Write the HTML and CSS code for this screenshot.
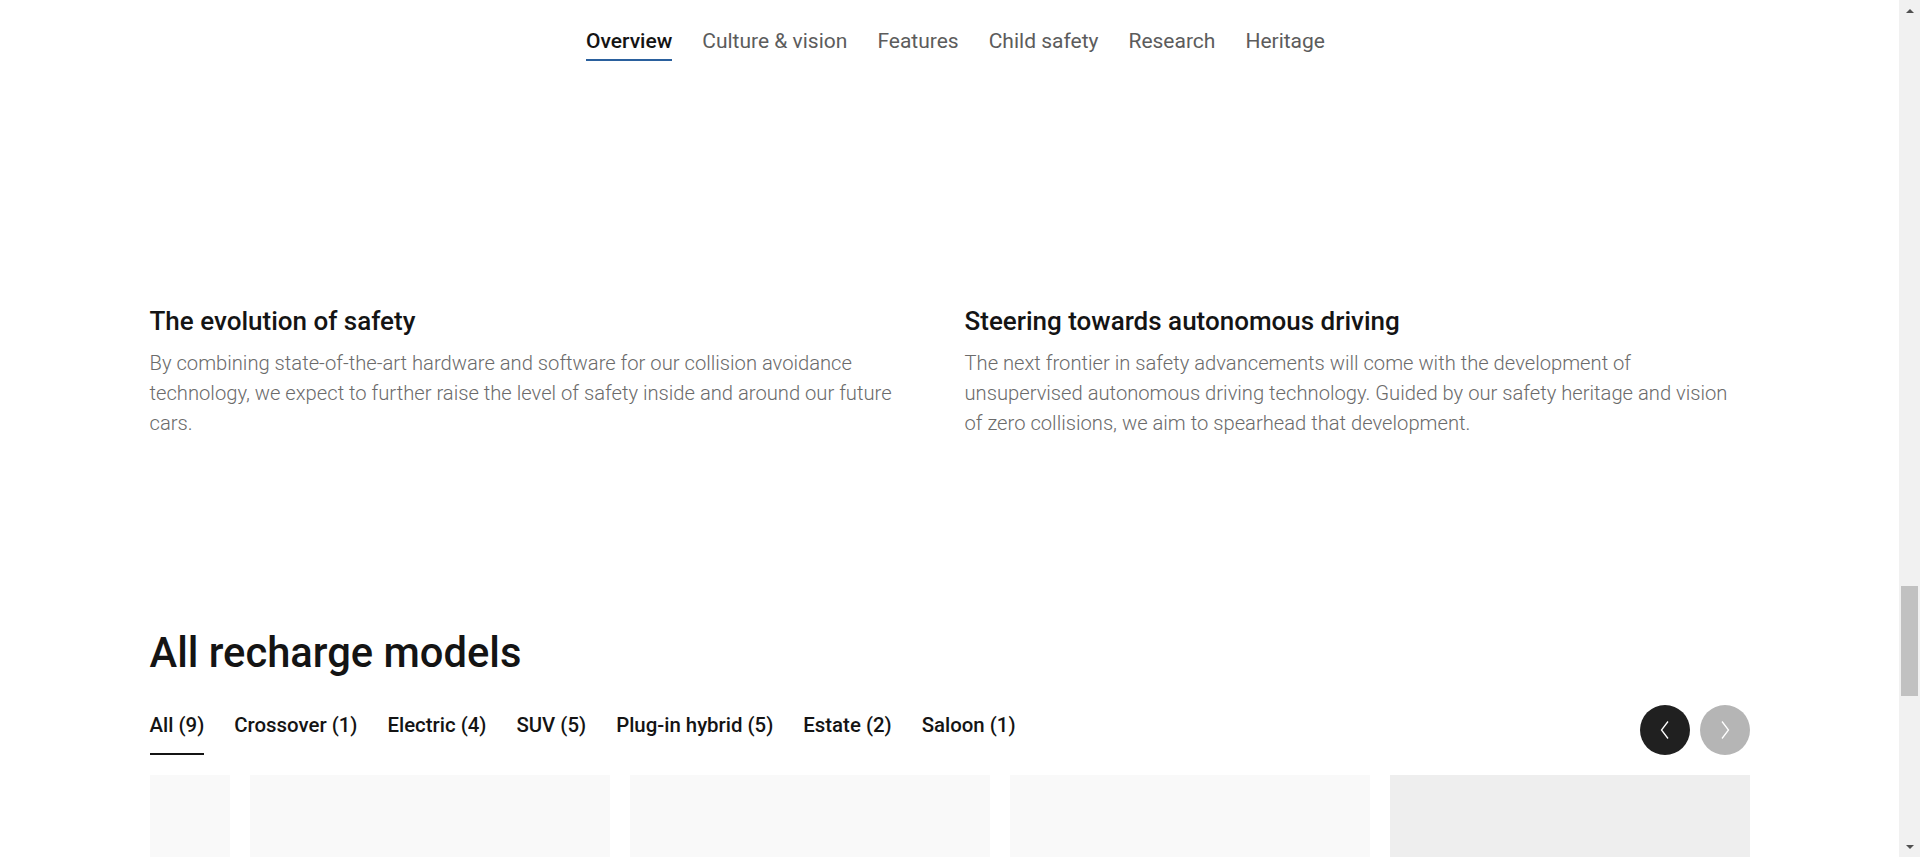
FILE: index.html
```html
<!DOCTYPE html>
<html lang="en">
<head>
<meta charset="utf-8">
<title>Safety</title>
<link rel="stylesheet" href="styles.css">
</head>
<body>
<div class="page">
  <main class="main">
    <nav class="subnav">
      <a class="subnav-item is-active">Overview</a>
      <a class="subnav-item">Culture &amp; vision</a>
      <a class="subnav-item">Features</a>
      <a class="subnav-item">Child safety</a>
      <a class="subnav-item">Research</a>
      <a class="subnav-item">Heritage</a>
    </nav>

    <section class="container features">
      <article class="feature">
        <h3 class="feature-title">The evolution of safety</h3>
        <p class="feature-text">By combining state-of-the-art hardware and software for our collision avoidance technology, we expect to further raise the level of safety inside and around our future cars.</p>
      </article>
      <article class="feature">
        <h3 class="feature-title">Steering towards autonomous driving</h3>
        <p class="feature-text">The next frontier in safety advancements will come with the development of unsupervised autonomous driving technology. Guided by our safety heritage and vision of zero collisions, we aim to spearhead that development.</p>
      </article>
    </section>

    <section class="container models">
      <h2 class="models-title">All recharge models</h2>
      <div class="models-bar">
        <div class="tabs">
          <a class="tab is-active">All (9)</a>
          <a class="tab">Crossover (1)</a>
          <a class="tab">Electric (4)</a>
          <a class="tab">SUV (5)</a>
          <a class="tab">Plug-in hybrid (5)</a>
          <a class="tab">Estate (2)</a>
          <a class="tab">Saloon (1)</a>
        </div>
        <div class="arrows">
          <button class="arrow arrow-prev" aria-label="Previous">
            <svg width="50" height="50" viewBox="0 0 50 50"><polyline points="28,16.5 21.5,25 28,33.5" fill="none" stroke="#fff" stroke-width="1.3"/></svg>
          </button>
          <button class="arrow arrow-next" aria-label="Next">
            <svg width="50" height="50" viewBox="0 0 50 50"><polyline points="22,16.5 28.5,25 22,33.5" fill="none" stroke="#fff" stroke-width="1.3"/></svg>
          </button>
        </div>
      </div>
      <div class="cards">
        <div class="card card-partial"></div>
        <div class="card"></div>
        <div class="card"></div>
        <div class="card"></div>
        <div class="card card-loading"></div>
      </div>
    </section>
  </main>

  <div class="scrollbar">
    <div class="sb-btn"><span class="tri tri-up"></span></div>
    <div class="sb-track"><div class="sb-thumb"></div></div>
    <div class="sb-btn"><span class="tri tri-down"></span></div>
  </div>
</div>
</body>
</html>
```

FILE: styles.css
```css
* { box-sizing: border-box; }
html, body { margin: 0; padding: 0; height: 100%; overflow: hidden; background: #fff; }
body { font-family: Roboto, "Liberation Sans", Arial, sans-serif; color: #141414; }

.page { display: flex; height: 857px; }
.main { flex: 1; min-width: 0; overflow: hidden; }

/* sub navigation */
.subnav {
  display: flex;
  justify-content: center;
  gap: 30px;
  padding-top: 29px;
  padding-left: 12px;
  height: 62px;
}
.subnav-item {
  font-size: 21px;
  line-height: 24px;
  color: #5c5c5c;
  padding-bottom: 6px;
  border-bottom: 2px solid transparent;
  height: 32px;
  white-space: nowrap;
}
.subnav-item.is-active { color: #141414; font-weight: 500; border-bottom-color: #2a609d; }

.container { width: 1600px; margin: 0 auto; }

/* feature columns */
.features {
  display: grid;
  grid-template-columns: 785px 785px;
  column-gap: 30px;
  margin-top: 243px;
}
.feature-title {
  margin: 0;
  font-size: 26px;
  line-height: 32px;
  font-weight: 500;
  color: #141414;
}
.feature-text {
  margin: 11px 0 0;
  font-size: 20.2px;
  line-height: 30px;
  font-weight: 300;
  color: #6b6b6b;
}

/* models */
.models { margin-top: 191px; }
.models-title {
  margin: 0;
  font-size: 41.7px;
  line-height: 48px;
  font-weight: 500;
  color: #141414;
}
.models-bar {
  display: flex;
  justify-content: space-between;
  align-items: flex-end;
  margin-top: 28px;
}
.tabs { display: flex; gap: 30px; }
.tab {
  font-size: 20.4px;
  line-height: 24px;
  font-weight: 500;
  color: #141414;
  padding-bottom: 16px;
  border-bottom: 2px solid transparent;
  white-space: nowrap;
}
.tab.is-active { border-bottom-color: #141414; }

.arrows { display: flex; gap: 10px; }
.arrow {
  width: 50px; height: 50px;
  border: 0; padding: 0; margin: 0;
  border-radius: 50%;
  display: flex; align-items: center; justify-content: center;
}
.arrow svg { display: block; }
.arrow-prev { background: #202020; }
.arrow-next { background: #b5b5b5; }

.cards { display: flex; gap: 20px; margin-top: 20px; }
.card { width: 360px; height: 400px; flex: none; background: #f9f9f9; }
.card-partial { width: 80px; }
.card-loading { background: #eeeeee; }

/* fake browser scrollbar */
.scrollbar {
  width: 21px;
  flex: none;
  background: #f1f1f1;
  display: flex;
  flex-direction: column;
}
.sb-btn { height: 21px; display: flex; align-items: center; justify-content: center; }
.sb-track { flex: 1; padding-top: 565px; }
.sb-thumb { margin: 0 2px; height: 110px; background: #c1c1c1; }
.tri { width: 0; height: 0; border-left: 4.5px solid transparent; border-right: 4.5px solid transparent; }
.tri-up { border-bottom: 4.5px solid #505050; }
.tri-down { border-top: 4.5px solid #505050; }
```
